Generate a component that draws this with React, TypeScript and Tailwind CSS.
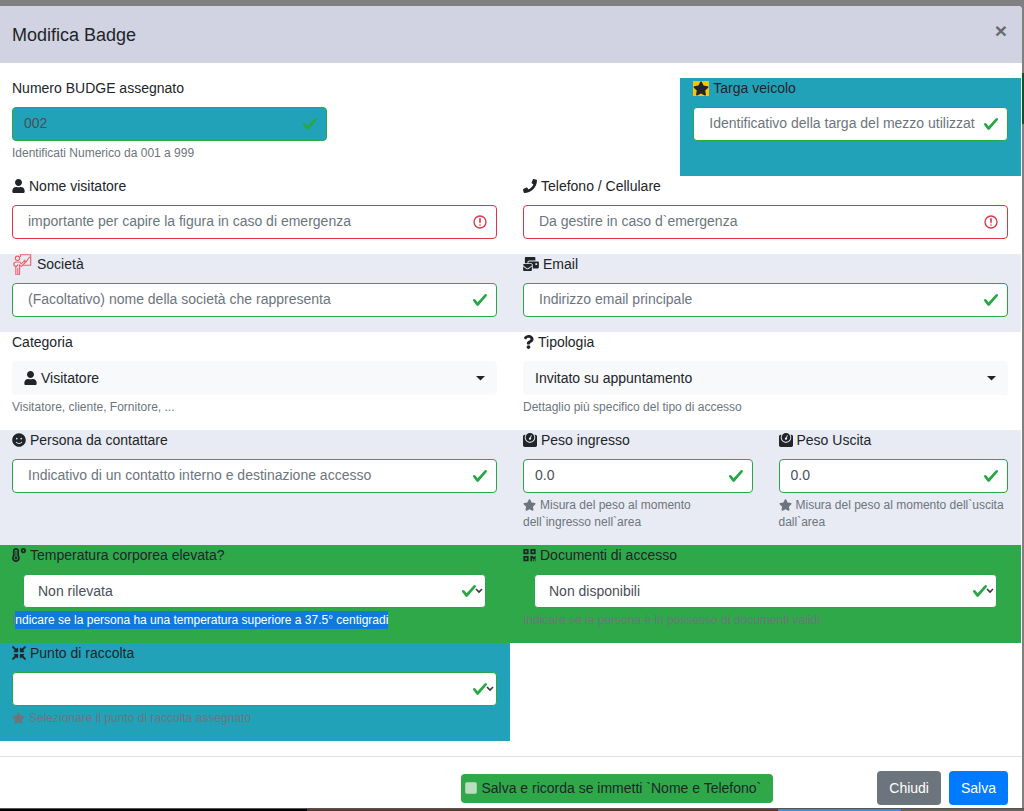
import React from "react";
import {
  FaCompressArrowsAlt,
  FaMailBulk,
  FaPhone,
  FaQrcode,
  FaQuestion,
  FaSmile,
  FaStar,
  FaTemperatureHigh,
  FaUser,
  FaWeight,
} from "react-icons/fa";

const check = (
  <svg viewBox="0 0 8 8" className="size-4" aria-hidden="true">
    <path
      fill="#28a745"
      d="M2.3 6.73L.6 4.53c-.4-1.04.46-1.4 1.1-.8l1.1 1.4 3.4-3.8c.6-.63 1.6-.27 1.2.7l-4 4.6c-.43.5-.8.4-1.1.1z"
    />
  </svg>
);

const warning = (
  <svg viewBox="0 0 12 12" className="size-4" fill="none" stroke="#dc3545" aria-hidden="true">
    <circle cx="6" cy="6" r="4.5" />
    <path strokeLinejoin="round" d="M5.8 3.6h.4L6 6.5z" />
    <circle cx="6" cy="8.2" r=".6" fill="#dc3545" stroke="none" />
  </svg>
);

const presenter = (
  <svg viewBox="0 0 20 21" className="h-[21px] w-[21px]" fill="none" stroke="#ee5f6b" strokeWidth="1.1" aria-hidden="true">
    <circle cx="5" cy="4.300" r="2.200" />
    <path d="M8 3V.8h10.200v10.400H10.500M11.500 6l2 2 3.800-5.300" />
    <path d="M3 8h4.300l1.500 1.800 2.800-2.600 1.200 1.200-3.800 4-1.900-1.300v9.900H3.300V13L1.300 11V9.200zM5.300 14v7M3.300 13l2.500-2.500" />
  </svg>
);

type FieldProps = {
  id: string;
  label: string;
  icon?: React.ReactNode;
  help?: React.ReactNode;
  className?: string;
  children: React.ReactNode;
};

function Field({ id, label, icon, help, className = "", children }: FieldProps) {
  return (
    <div className={`min-w-0 px-[13px] pb-[15px] ${className}`}>
      <label htmlFor={id} className="mb-[9px] flex h-5 items-center gap-1 text-[#212529]">
        {icon}
        <span>{label}</span>
      </label>
      {children}
      {help && <small className="mt-1 -mb-px block text-[12px] leading-[17px] text-[#6c757d]">{help}</small>}
    </div>
  );
}

type TextProps = { id: string; placeholder?: string; value?: string; invalid?: boolean; disabled?: boolean };

function TextInput({ id, placeholder, value, invalid, disabled }: TextProps) {
  return (
    <div className="relative">
      <input
        id={id}
        type="text"
        placeholder={placeholder}
        defaultValue={value}
        disabled={disabled}
        className={`block h-[34px] w-full rounded border pr-8 pb-0.5 text-[#495057] placeholder:text-[#6c757d] placeholder:opacity-100 ${
          invalid ? "border-[#dc3545]" : "border-[#28a745]"
        } ${disabled ? "bg-[#21a2b9]" : "bg-white"} ${placeholder ? "pl-[15px]" : "pl-[11px]"}`}
      />
      <span className="pointer-events-none absolute inset-y-0 right-[9px] flex items-center">
        {invalid ? warning : check}
      </span>
    </div>
  );
}

function SelectInput({ id, option }: { id: string; option: string }) {
  return (
    <div className="relative">
      <select
        id={id}
        className="block h-[34px] w-full appearance-none rounded border border-[#28a745] bg-white pr-8 pl-[14px] text-[#495057]"
      >
        <option>{option}</option>
      </select>
      <span className="pointer-events-none absolute inset-y-0 right-[9px] flex items-center">{check}</span>
      <svg
        viewBox="0 0 8 6"
        className="pointer-events-none absolute top-[14px] right-[3px] h-1.5 w-2"
        fill="none"
        stroke="#343a40"
        strokeWidth="1.600"
        aria-hidden="true"
      >
        <path d="M1 1l3 3 3-3" />
      </svg>
    </div>
  );
}

function Picker({ id, icon, text }: { id: string; icon?: React.ReactNode; text: string }) {
  return (
    <button
      id={id}
      type="button"
      className="flex h-[34px] w-full items-center gap-1 rounded bg-[#f8f9fa] px-3 text-[#212529]"
    >
      {icon}
      <span className="flex-1 text-left">{text}</span>
      <svg viewBox="0 0 9 5" className="h-[5px] w-[9px]" aria-hidden="true">
        <path d="M0 0h9L4.500 4.500z" fill="#212529" />
      </svg>
    </button>
  );
}

const person = <FaUser className="h-[14px] w-[13px] shrink-0" />;
const weight = <FaWeight className="size-[14px] shrink-0" />;
const helpStar = <FaStar className="mr-1 inline h-3 w-[13px] align-[-2px]" />;

export default function App() {
  return (
    <div className="bg-[#808080] pt-1.5 font-['Liberation_Sans',Arial,sans-serif] text-[14px] leading-5">
      <div className="flex">
        <div role="dialog" aria-labelledby="title" className="min-w-0 flex-1 overflow-hidden rounded-tr bg-white">
          <header className="flex h-[57px] items-center justify-between bg-[#d1d3e2] pr-[15px] pl-3">
            <h1 id="title" className="text-[18px] text-[#212529]">
              Modifica Badge
            </h1>
            <button type="button" aria-label="Close" className="mb-2 text-[21px] font-bold text-[#696a71]">
              ×
            </button>
          </header>

          <main className="mr-px -ml-px py-[15px]">
            <div className="grid grid-cols-3">
              <Field id="numero" label="Numero BUDGE assegnato" help="Identificati Numerico da 001 a 999">
                <TextInput id="numero" value="002" disabled />
              </Field>
              <Field
                id="targa"
                label="Targa veicolo"
                icon={<FaStar className="h-[15px] w-4 bg-[#ffc107]" />}
                className="col-start-3 bg-[#21a2b9]"
              >
                <TextInput id="targa" placeholder="Identificativo della targa del mezzo utilizzato" />
              </Field>
            </div>

            <div className="grid grid-cols-2">
              <Field id="nome" label="Nome visitatore" icon={person}>
                <TextInput id="nome" placeholder="importante per capire la figura in caso di emergenza" invalid />
              </Field>
              <Field id="telefono" label="Telefono / Cellulare" icon={<FaPhone className="size-[14px]" />}>
                <TextInput id="telefono" placeholder="Da gestire in caso d`emergenza" invalid />
              </Field>
            </div>

            <div className="grid grid-cols-2 bg-[#e8ebf3]">
              <Field id="societa" label="Società" icon={presenter}>
                <TextInput id="societa" placeholder="(Facoltativo) nome della società che rappresenta" />
              </Field>
              <Field id="email" label="Email" icon={<FaMailBulk className="h-[14px] w-4" />}>
                <TextInput id="email" placeholder="Indirizzo email principale" />
              </Field>
            </div>

            <div className="grid grid-cols-2">
              <Field id="categoria" label="Categoria" help="Visitatore, cliente, Fornitore, ...">
                <Picker id="categoria" icon={person} text="Visitatore" />
              </Field>
              <Field
                id="tipologia"
                label="Tipologia"
                icon={<FaQuestion className="h-[14px] w-[11px]" />}
                help="Dettaglio più specifico del tipo di accesso"
              >
                <Picker id="tipologia" text="Invitato su appuntamento" />
              </Field>
            </div>

            <div className="grid grid-cols-4 bg-[#e8ebf3]">
              <Field
                id="persona"
                label="Persona da contattare"
                icon={<FaSmile className="size-[14px]" />}
                className="col-span-2"
              >
                <TextInput id="persona" placeholder="Indicativo di un contatto interno e destinazione accesso" />
              </Field>
              <Field
                id="ingresso"
                label="Peso ingresso"
                icon={weight}
                help={<>{helpStar}Misura del peso al momento dell`ingresso nell`area</>}
              >
                <TextInput id="ingresso" value="0.0" />
              </Field>
              <Field
                id="uscita"
                label="Peso Uscita"
                icon={weight}
                help={<>{helpStar}Misura del peso al momento dell`uscita dall`area</>}
              >
                <TextInput id="uscita" value="0.0" />
              </Field>
            </div>

            <div className="grid grid-cols-2 bg-[#2fa84a]">
              <Field
                id="temperatura"
                label="Temperatura corporea elevata?"
                icon={<FaTemperatureHigh className="size-[14px]" />}
                help={
                  <>
                    I<span className="bg-[#0f7adb] py-0.5 text-white">ndicare se la persona ha una temperatura superiore a 37.5° centigradi</span>
                  </>
                }
              >
                <div className="px-[11px]">
                  <SelectInput id="temperatura" option="Non rilevata" />
                </div>
              </Field>
              <Field
                id="documenti"
                label="Documenti di accesso"
                icon={<FaQrcode className="h-[14px] w-[13px]" />}
                help="Indicare se la persona è in possesso di documenti validi"
              >
                <div className="px-[11px]">
                  <SelectInput id="documenti" option="Non disponibili" />
                </div>
              </Field>
            </div>

            <div className="grid grid-cols-2">
              <Field
                id="raccolta"
                label="Punto di raccolta"
                icon={<FaCompressArrowsAlt className="size-[14px]" />}
                help={<>{helpStar}Selezionare il punto di raccolta assegnato</>}
                className="bg-[#21a2b9]"
              >
                <SelectInput id="raccolta" option="" />
              </Field>
            </div>
          </main>

          <footer className="flex items-center justify-end gap-2 border-t border-[#dee2e6] pt-[14px] pr-[14px] pb-[3px]">
            <label className="mr-24 flex h-[29px] items-center gap-1 rounded bg-[#2fa84a] pr-3 pl-1 text-[#212529]">
              <input type="checkbox" disabled className="size-3 appearance-none rounded-xs border border-[#9fcfa8] bg-[#b9dfc0]" />
              Salva e ricorda se immetti `Nome e Telefono`
            </label>
            <button type="button" className="h-[34px] rounded bg-[#6c757d] px-3 text-white">
              Chiudi
            </button>
            <button type="button" className="h-[34px] rounded bg-[#007bff] px-3 text-white">
              Salva
            </button>
          </footer>
        </div>
        <div className="flex w-0.5 flex-col">
          <div className="h-[67px]" />
          <div className="h-[51px] bg-[#14532a]" />
        </div>
      </div>
      <div className="flex h-[3px] border-t border-[#555555]">
        <div className="w-[30%] bg-black" />
        <div className="flex-1 bg-[#5b3a30]" />
        <div className="w-[12%] bg-[#4a86d8]" />
        <div className="w-[12%] bg-[#66645a]" />
      </div>
    </div>
  );
}
